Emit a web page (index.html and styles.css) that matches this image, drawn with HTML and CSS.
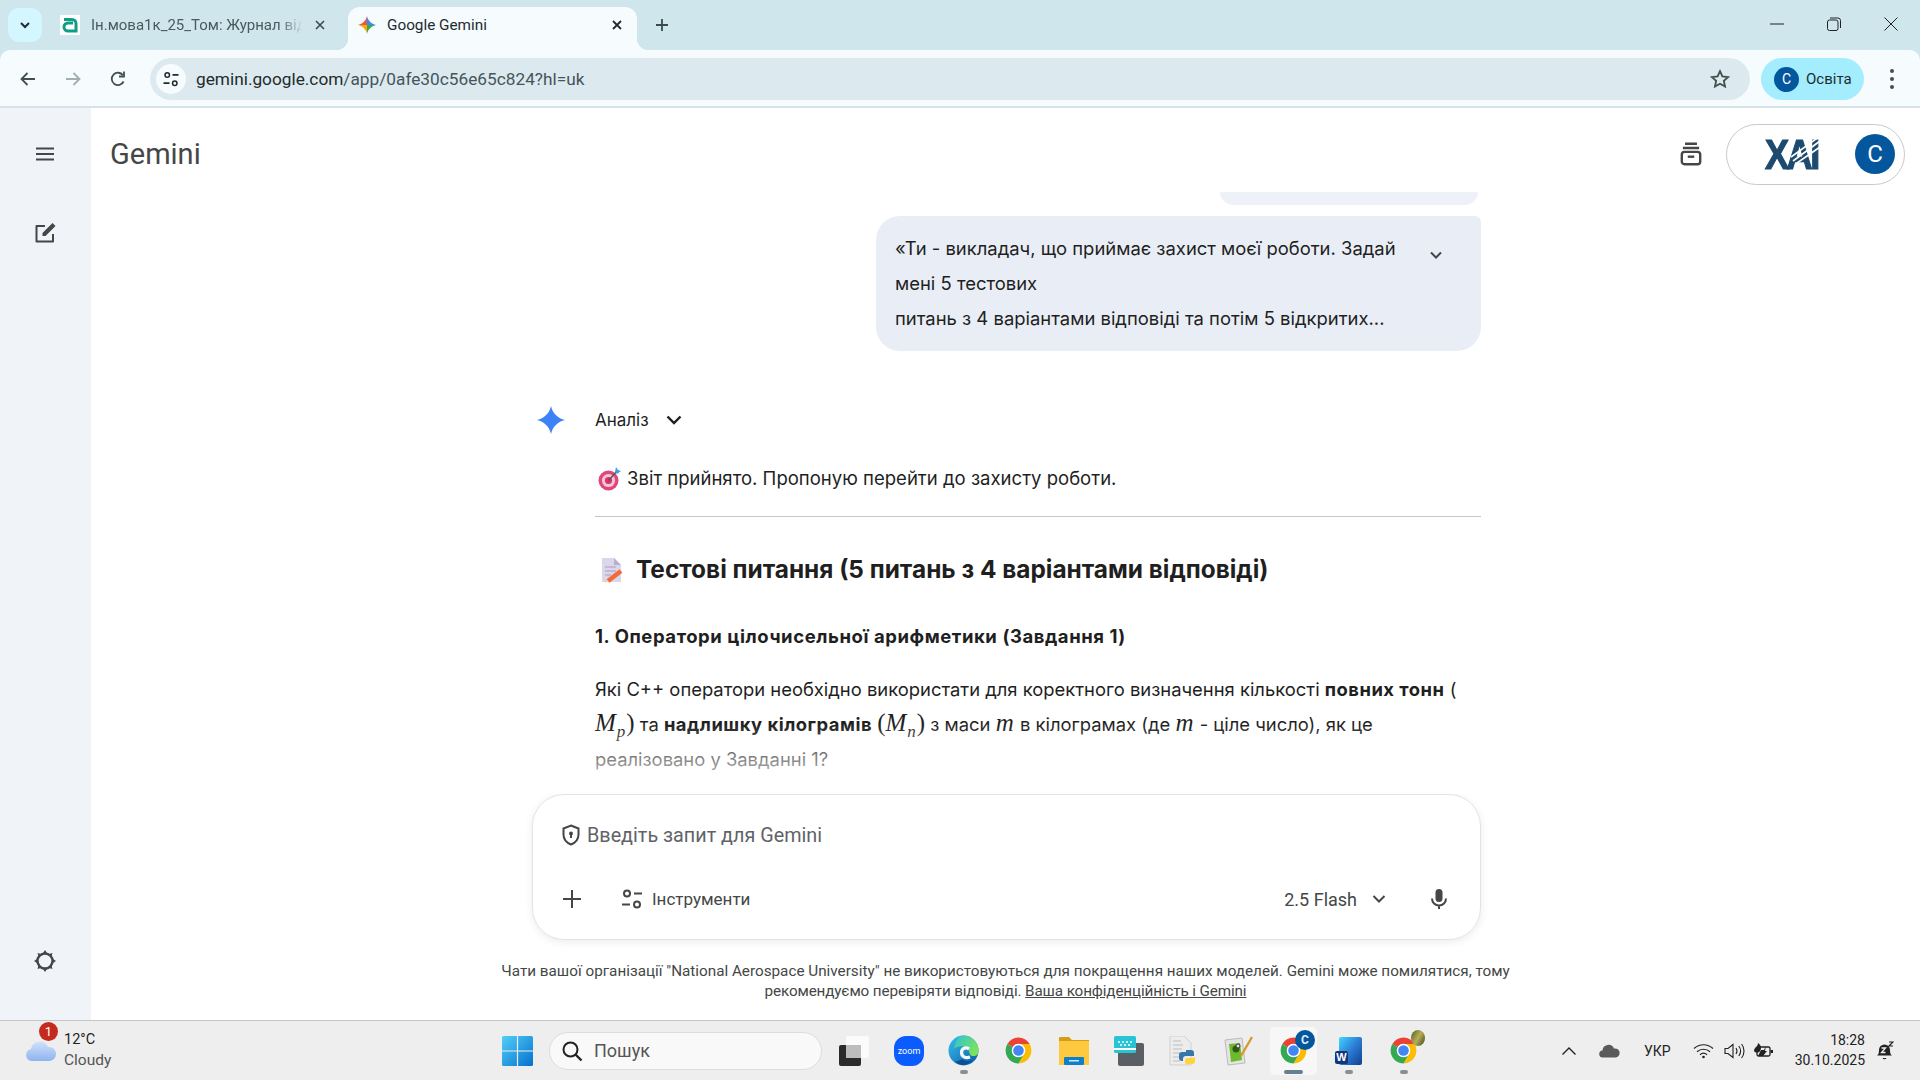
FILE: index.html
```html
<!DOCTYPE html>
<html lang="uk">
<head>
    <meta charset="UTF-8">
    <title>Google Gemini</title>
    <link rel="stylesheet" href="styles.css">
</head>
<body>
    <svg class="defs" width="0" height="0">
        <symbol id="chrome" viewBox="0 0 48 48">
            <path fill="#ea4335" d="M6.68 14A20 20 0 0 1 41.32 14H24A10 10 0 0 0 15.34 19Z"/>
            <path fill="#fbbc04" d="M41.32 14A20 20 0 0 1 24 44L32.66 29A10 10 0 0 0 24 14Z"/>
            <path fill="#34a853" d="M24 44A20 20 0 0 1 6.68 14L15.34 19A10 10 0 0 0 32.66 29Z"/>
            <circle cx="24" cy="24" r="10.5" fill="#fff"/>
            <circle cx="24" cy="24" r="8.2" fill="#4285f4"/>
        </symbol>
        <symbol id="spark" viewBox="0 0 24 24">
            <path d="M12 0C13.2 6 18 10.800 24 12C18 13.200 13.200 18 12 24C10.800 18 6 13.200 0 12C6 10.800 10.800 6 12 0Z"/>
        </symbol>
        <symbol id="tune" viewBox="0 0 24 24">
            <circle cx="7" cy="6.5" r="3" fill="none" stroke="currentColor" stroke-width="2"/>
            <path d="M14 6.5h8M2 17.5h8" stroke="currentColor" stroke-width="2.2" fill="none"/>
            <circle cx="17" cy="17.5" r="3" fill="none" stroke="currentColor" stroke-width="2"/>
        </symbol>
    </svg>

    <div class="tabstrip">
        <button class="tab-list">
            <svg width="14" height="14" viewBox="0 0 14 14"><path d="M3 5l4 4 4-4" fill="none" stroke="#1f2b2e" stroke-width="2"/></svg>
        </button>
        <div class="tab">
            <svg class="favicon" width="20" height="20" viewBox="0 0 20 20">
                <rect width="20" height="20" fill="#fff"/>
                <path d="M4 4.5h8a4 4 0 0 1 4 4V16H8a4 4 0 0 1 0-8h5" fill="none" stroke="#0f9d87" stroke-width="3"/>
            </svg>
            <span class="tab-title faded">Ін.мова1к_25_Том: Журнал від</span>
            <svg class="tab-close" width="12" height="12" viewBox="0 0 12 12"><path d="M2 2l8 8M10 2l-8 8" stroke="#3c4a4e" stroke-width="1.6"/></svg>
        </div>
        <div class="tab tab-active">
            <svg class="favicon" width="18" height="18" viewBox="0 0 24 24">
                <path fill="#e8574a" d="M12 0C10.800 6 6 10.800 0 12H12Z"/>
                <path fill="#4285f4" d="M12 0C13.200 6 18 10.800 24 12H12Z"/>
                <path fill="#34a853" d="M24 12C18 13.200 13.200 18 12 24V12Z"/>
                <path fill="#f9ab00" d="M0 12C6 13.200 10.800 18 12 24V12Z"/>
            </svg>
            <span class="tab-title">Google Gemini</span>
            <svg class="tab-close" width="12" height="12" viewBox="0 0 12 12"><path d="M2 2l8 8M10 2l-8 8" stroke="#1f2b2e" stroke-width="1.8"/></svg>
        </div>
        <svg class="new-tab" width="16" height="16" viewBox="0 0 16 16"><path d="M8 2v12M2 8h12" stroke="#3c4a4e" stroke-width="1.8"/></svg>
        <div class="win-controls">
            <span class="win-btn"><svg width="14" height="14" viewBox="0 0 14 14"><path d="M0 7h14" stroke="#222" stroke-width="1"/></svg></span>
            <span class="win-btn"><svg width="14" height="14" viewBox="0 0 14 14"><rect x="0.5" y="3" width="10.5" height="10.5" rx="2" fill="none" stroke="#222"/><path d="M3 1h8a2.5 2.5 0 0 1 2.5 2.5V11" fill="none" stroke="#222"/></svg></span>
            <span class="win-btn"><svg width="14" height="14" viewBox="0 0 14 14"><path d="M.5.5l13 13M13.5.5l-13 13" stroke="#222" stroke-width="1"/></svg></span>
        </div>
    </div>

    <div class="toolbar">
        <span class="nav-btn"><svg width="20" height="20" viewBox="0 0 20 20"><path d="M17 10H4M9.5 4L3.5 10l6 6" fill="none" stroke="#41504f" stroke-width="1.8"/></svg></span>
        <span class="nav-btn"><svg width="20" height="20" viewBox="0 0 20 20"><path d="M3 10h13M10.5 4l6 6-6 6" fill="none" stroke="#a3aeb0" stroke-width="1.8"/></svg></span>
        <span class="nav-btn"><svg width="20" height="20" viewBox="0 0 20 20"><path d="M15.6 12.5a6.2 6.2 0 1 1-.6-6.2" fill="none" stroke="#41504f" stroke-width="1.8"/><path d="M16 2.5V7.5H11" fill="none" stroke="#41504f" stroke-width="1.8"/></svg></span>
        <div class="omnibox">
            <span class="site-info"><svg width="18" height="18" viewBox="0 0 24 24" class="ink-dark"><use href="#tune"/></svg></span>
            <span class="url">gemini.google.com<span class="url-path">/app/0afe30c56e65c824?hl=uk</span></span>
            <svg class="star" width="22" height="22" viewBox="0 0 24 24"><path d="M12 3.5l2.6 5.7 6.2.7-4.6 4.2 1.3 6.1L12 17.2l-5.5 3 1.3-6.1L3.2 9.9l6.2-.7z" fill="none" stroke="#41504f" stroke-width="2"/></svg>
        </div>
        <div class="profile-pill"><span class="profile-avatar">С</span><span>Освіта</span></div>
        <span class="menu-btn"><i></i><i></i><i></i></span>
    </div>

    <div class="app">
        <aside class="sidebar">
            <svg width="24" height="24" viewBox="0 0 24 24"><path d="M3 6.5h18M3 12h18M3 17.5h18" stroke="#444746" stroke-width="2"/></svg>
            <svg class="side-edit" width="24" height="24" viewBox="0 0 24 24"><path d="M20 13v7.500H3.500V5H12" fill="none" stroke="#444746" stroke-width="2" stroke-linejoin="round"/><path d="M9.500 15v-3L19.500 2l3 3-10 10z" fill="#444746"/></svg>
            <svg class="side-settings" width="24" height="24" viewBox="0 0 24 24"><circle cx="12" cy="12" r="7.5" fill="none" stroke="#444746" stroke-width="2.400"/><path d="M10 4l2-3 2 3zM10 20l2 3 2-3zM4 10l-3 2 3 2zM20 10l3 2-3 2zM5.500 7.500l-1-3.500 3.500 1zM18.500 7.500l1-3.500-3.500 1zM5.500 16.500l-1 3.500 3.500-1zM18.500 16.500l1 3.500-3.500-1z" fill="#444746"/></svg>
        </aside>
        <main class="main">
            <header class="page-head">
                <span class="brand">Gemini</span>
                <svg class="archive" width="26" height="26" viewBox="0 0 24 24">
                    <path d="M6.5 2.5h11M4.5 6.5h15" stroke="#444746" stroke-width="2.4" fill="none"/>
                    <rect x="3.5" y="10" width="17" height="11.5" rx="2.5" fill="none" stroke="#444746" stroke-width="2.2"/>
                    <path d="M9 14.5h6" stroke="#444746" stroke-width="2.2"/>
                </svg>
                <div class="account">
                    <span class="xai"><b>XAI</b>
                        <svg class="xai-stripes" width="30" height="32" viewBox="0 0 30 32"><path d="M2 25L29 5M6 27L29 11M0 21L29 0" stroke="#fff" stroke-width="1.6"/></svg>
                    </span>
                    <span class="account-avatar">С</span>
                </div>
            </header>

            <section class="chat">
                <div class="column">
                    <div class="prev-bubble"></div>
                    <div class="bubble">
                        <p>«Ти - викладач, що приймає захист моєї роботи. Задай<br>мені 5 тестових<br>питань з 4 варіантами відповіді та потім 5 відкритих...</p>
                        <svg class="bubble-chevron" width="20" height="20" viewBox="0 0 20 20"><path d="M5 7.5l5 5 5-5" fill="none" stroke="#444746" stroke-width="2"/></svg>
                    </div>
                    <div class="analysis">
                        <svg class="spark" width="28" height="28"><use href="#spark"/></svg>
                        <span>Аналіз</span>
                        <svg width="18" height="18" viewBox="0 0 18 18"><path d="M2.5 5.5L9 12l6.5-6.5" fill="none" stroke="#1f1f1f" stroke-width="2.4"/></svg>
                    </div>
                    <div class="answer">
                        <p class="lead">
                            <svg class="emoji" width="23" height="24" viewBox="0 0 23 24">
                                <circle cx="10.5" cy="13.5" r="10" fill="#e0457b"/>
                                <circle cx="10.5" cy="13.5" r="6.6" fill="#f6c6d6"/>
                                <circle cx="10.5" cy="13.5" r="3.6" fill="#d8366d"/>
                                <path d="M10.5 13.5L19 4" stroke="#555" stroke-width="1.4"/>
                                <path d="M17 5l1-5 2 3 3 1-4 3z" fill="#3aa0e8"/>
                            </svg>
                            Звіт прийнято. Пропоную перейти до захисту роботи.
                        </p>
                        <hr class="rule">
                        <h2>
                            <svg class="emoji-doc" width="26" height="26" viewBox="0 0 26 26">
                                <path d="M3 1h12l7 7v17H3z" fill="#dcd6ea"/>
                                <path d="M15 1l7 7h-7z" fill="#b9b0cd"/>
                                <path d="M6 10h11M6 14h11M6 18h6" stroke="#a79dbf" stroke-width="1.2"/>
                                <path d="M9 24l13-10" stroke="#f26b3a" stroke-width="4.500"/>
                                <path d="M5.500 25.500l1.500-4 2.500 3z" fill="#f8c9a8"/>
                            </svg>
                            Тестові питання (5 питань з 4 варіантами відповіді)
                        </h2>
                        <h3>1. Оператори цілочисельної арифметики (Завдання 1)</h3>
                        <p class="question">Які С++ оператори необхідно використати для коректного визначення кількості <b>повних тонн</b> (<br><span class="math"><i>M<sub>p</sub></i>)</span> та <b>надлишку кілограмів</b> <span class="math">(<i>M<sub>n</sub></i>)</span> з маси <span class="math"><i>m</i></span> в кілограмах (де <span class="math"><i>m</i></span> - ціле число), як це<br>реалізовано у Завданні 1?</p>
                    </div>
                </div>
                <div class="chat-fade"></div>
            </section>

            <div class="column composer">
                <div class="composer-input">
                    <svg width="20" height="22" viewBox="0 0 20 22"><path d="M10 1.5l7.5 3v6c0 4.6-3 8.2-7.5 10-4.500-1.800-7.500-5.400-7.500-10v-6z" fill="none" stroke="#444746" stroke-width="2"/><circle cx="10" cy="9.500" r="2" fill="#444746"/><path d="M10 10v4" stroke="#444746" stroke-width="2"/></svg>
                    <span>Введіть запит для Gemini</span>
                </div>
                <div class="composer-tools">
                    <svg width="24" height="24" viewBox="0 0 24 24"><path d="M12 3v18M3 12h18" stroke="#444746" stroke-width="2"/></svg>
                    <svg class="tools-icon" width="24" height="24"><use href="#tune"/></svg>
                    <span class="tools-label">Інструменти</span>
                    <span class="model">2.5 Flash</span>
                    <svg class="model-chevron" width="18" height="18" viewBox="0 0 18 18"><path d="M3.500 6L9 11.500 14.500 6" fill="none" stroke="#444746" stroke-width="2"/></svg>
                    <svg class="mic" width="24" height="24" viewBox="0 0 24 24"><rect x="8.500" y="2" width="7" height="13" rx="3.500" fill="#444746"/><path d="M5 11.500a7 7 0 0 0 14 0M12 18.500V22" fill="none" stroke="#444746" stroke-width="2"/></svg>
                </div>
            </div>
            <p class="disclaimer">Чати вашої організації "National Aerospace University" не використовуються для покращення наших моделей. Gemini може помилятися, тому<br><span class="disclaimer-tail">рекомендуємо перевіряти відповіді. <a href="#">Ваша конфіденційність і Gemini</a></span></p>
        </main>
    </div>

    <footer class="taskbar">
        <div class="weather">
            <svg class="weather-cloud" width="32" height="22" viewBox="0 0 32 22">
                <defs><linearGradient id="cloud" x1="0" y1="0" x2="0" y2="1"><stop offset="0" stop-color="#cfe0fb"/><stop offset="1" stop-color="#8fb4ee"/></linearGradient></defs>
                <path d="M7 21a6 6 0 0 1-1-11.900A9 9 0 0 1 23 7a7 7 0 0 1 2 14z" fill="url(#cloud)"/>
            </svg>
            <span class="weather-badge">1</span>
            <div class="weather-text"><span>12°C</span><span class="muted">Cloudy</span></div>
        </div>
        <svg class="win-logo" width="31" height="30" viewBox="0 0 31 30">
            <defs><linearGradient id="win" x1="0" y1="0" x2="1" y2="1"><stop offset="0" stop-color="#52d0f7"/><stop offset="1" stop-color="#0670ce"/></linearGradient></defs>
            <rect width="31" height="30" fill="url(#win)" rx="1.500"/>
            <path d="M15.500 0v30M0 15h31" stroke="#eee" stroke-width="1.200"/>
        </svg>
        <div class="search">
            <svg width="22" height="22" viewBox="0 0 22 22"><circle cx="9.500" cy="9.500" r="7" fill="none" stroke="#222" stroke-width="2"/><path d="M14.500 14.500l6 6" stroke="#222" stroke-width="2.400"/></svg>
            <span>Пошук</span>
        </div>
        <div class="tasks">
            <span class="task">
                <svg width="30" height="30" viewBox="0 0 30 30"><rect x="0" y="9" width="22" height="21" rx="2" fill="#2b2b2b"/><rect x="7" y="0" width="23" height="22" rx="2" fill="#fff" fill-opacity=".75"/><rect x="7" y="9" width="15" height="13" fill="#bdbdbd"/></svg>
            </span>
            <span class="task">
                <svg width="30" height="30" viewBox="0 0 30 30"><rect width="30" height="30" rx="12" fill="#0b5cff"/><text x="15" y="18" text-anchor="middle" class="zoom-word">zoom</text></svg>
            </span>
            <span class="task running">
                <svg width="31" height="31" viewBox="0 0 31 31">
                    <defs>
                        <linearGradient id="edge-a" x1="0" y1="0" x2="1" y2="1"><stop offset="0" stop-color="#35c1f1"/><stop offset="1" stop-color="#0c59a4"/></linearGradient>
                        <linearGradient id="edge-b" x1="0" y1="0" x2="1" y2="0.6"><stop offset="0" stop-color="#2bc3d6"/><stop offset="1" stop-color="#7ee35b"/></linearGradient>
                    </defs>
                    <circle cx="15.500" cy="15.500" r="15" fill="url(#edge-a)"/>
                    <path d="M15 .500A15 15 0 0 1 30.500 16c0 4-3 5.500-6 5-3-.5-3-3.500-4-6C19 11 10 9.500 6 14 7 6 10 .500 15 .500z" fill="url(#edge-b)"/>
                    <path d="M21 14c-3-2.500-7.500-.5-7.500 3.500s4 6 8.500 4.500" fill="none" stroke="#f4fbff" stroke-width="3.200"/>
                    <path d="M14 24c3 2.500 7 2.500 11 .5C21 31 11 32 7 26c3 .5 5-.5 7-2z" fill="#0c4f93"/>
                </svg>
            </span>
            <span class="task"><svg width="31" height="31"><use href="#chrome"/></svg></span>
            <span class="task">
                <svg width="30" height="30" viewBox="0 0 30 30"><path d="M0 2a1 1 0 0 1 1-1h9l3 3h17v4H0z" fill="#d89c12"/><path d="M0 5h30v24H0z" fill="#fcc93f"/><rect x="5" y="21" width="20" height="8" rx="1" fill="#0f7fca"/><rect x="10" y="24" width="10" height="1.500" fill="#cfe9fa"/></svg>
            </span>
            <span class="task">
                <svg width="30" height="30" viewBox="0 0 30 30"><rect x="4" y="7" width="26" height="23" rx="2" fill="#5a5f66"/><rect x="0" y="0" width="22" height="17" rx="1.500" fill="#26c4d6"/><path d="M4 6h2M8 6h2M12 6h2M16 6h2M6 9h2M10 9h2M14 9h2" stroke="#fff" stroke-width="1.500"/><rect x="0" y="12" width="22" height="2" fill="#fff"/></svg>
            </span>
            <span class="task">
                <svg width="30" height="30" viewBox="0 0 30 30"><path d="M1 0h14l7 7v22H1z" fill="#ececec" stroke="#cfcfcf"/><path d="M4 5h8M4 9h10M4 13h9M4 17h7M4 21h8M4 25h7" stroke="#bdbdbd"/><path d="M17 14h5a3 3 0 0 1 3 3v3H17a3 3 0 0 0-3 3v2h-1a3 3 0 0 1-3-3v-3a3 3 0 0 1 3-3h4z" fill="#3776ab"/><path d="M19 28h4a3 3 0 0 0 3-3v-4h-1l-1 1h-5a3 3 0 0 0-3 3v1a2 2 0 0 0 3 2z" fill="#ffd43b"/></svg>
            </span>
            <span class="task">
                <svg width="30" height="30" viewBox="0 0 30 30"><path d="M1 4l17-2 3 25-17 2z" fill="#e4e4e4" stroke="#bbb"/><path d="M5 8l11-1 2 17-11 2z" fill="#6dbb2c"/><circle cx="12" cy="13" r="3.500" fill="#2c5d16"/><circle cx="14" cy="10" r="2" fill="#e8e8e8" stroke="#333"/><path d="M17 20L28 1" stroke="#d79a32" stroke-width="2.400"/></svg>
            </span>
            <span class="task running active">
                <svg width="31" height="31"><use href="#chrome"/></svg>
                <span class="chrome-profile">С</span>
            </span>
            <span class="task running">
                <svg width="27" height="28" viewBox="0 0 27 28">
                    <defs><linearGradient id="word" x1="0" y1="0" x2="1" y2="1"><stop offset="0" stop-color="#41d6ff"/><stop offset="0.5" stop-color="#2b7cd3"/><stop offset="1" stop-color="#103f91"/></linearGradient></defs>
                    <rect x="4" y="0" width="23" height="28" rx="2" fill="url(#word)"/>
                    <rect x="0" y="14" width="13" height="13" rx="2" fill="#11357f"/>
                    <text x="6.500" y="24" text-anchor="middle" class="word-letter">W</text>
                </svg>
            </span>
            <span class="task running">
                <svg width="31" height="31"><use href="#chrome"/></svg>
                <span class="chrome-melon"></span>
            </span>
        </div>
        <div class="tray">
            <svg width="16" height="10" viewBox="0 0 16 10"><path d="M1.500 8.500L8 2l6.500 6.500" fill="none" stroke="#222" stroke-width="1.400"/></svg>
            <svg class="tray-cloud" width="21" height="14" viewBox="0 0 21 14"><path d="M4 13.500a3.500 3.500 0 0 1-.5-7A6 6 0 0 1 15 4.500a4.500 4.500 0 0 1 2 9z" fill="#5a5a5a"/></svg>
            <span class="lang">УКР</span>
            <svg class="tray-wifi" width="21" height="16" viewBox="0 0 21 16"><path d="M1 5.500c5.500-5 13.500-5 19 0M4 8.700c3.700-3.300 9.300-3.300 13 0M7 11.700c2-1.700 5-1.700 7 0" fill="none" stroke="#222" stroke-width="1.200"/><circle cx="10.500" cy="14" r="1.300" fill="#222"/></svg>
            <svg class="tray-volume" width="21" height="16" viewBox="0 0 21 16"><path d="M1 5.500h3L9 1.500v13L4 10.500H1z" fill="none" stroke="#222" stroke-width="1.100"/><path d="M12 5c1.200 1.800 1.200 4.200 0 6M14.800 3c2.200 3 2.200 7 0 10M17.600 1c3.200 4 3.200 10 0 14" fill="none" stroke="#222" stroke-width="1.100"/></svg>
            <svg class="tray-battery" width="21" height="17" viewBox="0 0 21 17"><rect x="4" y="5" width="13" height="9" rx="1.500" fill="none" stroke="#222" stroke-width="1.300"/><rect x="17.500" y="8" width="2.500" height="3" fill="#222"/><path d="M5 14l3-6h3l2-4-1 5h2l-4 5z" fill="#222"/><path d="M1 9c0-4 4-4 4-8 3 2 4 5 2 8-1 2-5 2-6 0z" fill="#222"/></svg>
            <div class="clock"><span>18:28</span><span>30.10.2025</span></div>
            <svg class="tray-bell" width="18" height="20" viewBox="0 0 18 20"><path d="M1 14.500c1.500-1 2-2.500 2-5.500a5.500 5.500 0 0 1 11 0c0 3 .5 4.500 2 5.500z" fill="#222"/><path d="M6.500 17a2.200 2.200 0 0 0 4 0z" fill="#222"/><path d="M5.500 7h4l-4 4.500h4" fill="none" stroke="#eee" stroke-width="1.300"/><path d="M13 1h4l-4 4h4" fill="none" stroke="#222" stroke-width="1.200"/></svg>
        </div>
    </footer>
</body>
</html>
```

FILE: styles.css
```css
* {
    box-sizing: border-box;
}
body {
    margin: 0;
    width: 1920px;
    height: 1080px;
    overflow: hidden;
    display: flex;
    flex-direction: column;
    background-color: #cfe6ec;
    font-family: Roboto, "Noto Sans", sans-serif;
    color: #1f1f1f;
}
.defs {
    position: absolute;
}
svg {
    display: block;
    flex-shrink: 0;
}

/* browser tabs */
.tabstrip {
    height: 50px;
    display: flex;
    align-items: flex-start;
    padding-left: 8px;
    flex-shrink: 0;
}
.tab-list {
    width: 34px;
    height: 34px;
    margin-top: 8px;
    border: none;
    border-radius: 11px;
    background-color: #d3f6ff;
    display: flex;
    align-items: center;
    justify-content: center;
    padding: 0;
}
.tab {
    width: 292px;
    height: 43px;
    margin-top: 7px;
    margin-left: 6px;
    padding: 0 14px 7px 12px;
    display: flex;
    align-items: center;
    font-size: 15px;
    color: #4a5a5e;
    position: relative;
}
.tab-active {
    width: 289px;
    margin-left: 8px;
    padding: 0 14px 7px 10px;
    background-color: #f6fbfd;
    border-radius: 12px 12px 0 0;
    color: #1f2b2e;
    font-size: 15.300px;
}
.tab-active::before,
.tab-active::after {
    content: "";
    position: absolute;
    bottom: 0;
    width: 12px;
    height: 12px;
}
.tab-active::before {
    left: -12px;
    background: radial-gradient(circle at 0 0, transparent 12px, #f6fbfd 12.5px);
}
.tab-active::after {
    right: -12px;
    background: radial-gradient(circle at 100% 0, transparent 12px, #f6fbfd 12.5px);
}
.tab-title {
    flex: 1;
    margin-left: 11px;
    white-space: nowrap;
}
.faded {
    -webkit-mask-image: linear-gradient(to right, #000 188px, transparent 212px);
    mask-image: linear-gradient(to right, #000 188px, transparent 212px);
}
.tab-close {
    margin-left: 8px;
}
.new-tab {
    margin-left: 17px;
    margin-top: 17px;
}
.win-controls {
    margin-left: auto;
    display: flex;
    padding-right: 1px;
}
.win-btn {
    width: 57px;
    height: 48px;
    display: flex;
    align-items: center;
    justify-content: center;
}

/* address bar */
.toolbar {
    height: 58px;
    flex-shrink: 0;
    display: flex;
    align-items: center;
    padding: 2px 0 0 5px;
    background-color: #f6fbfd;
    border-bottom: 2px solid #d5e3e6;
    border-radius: 10px 10px 0 0;
}
.nav-btn {
    width: 45px;
    display: flex;
    justify-content: center;
}
.omnibox {
    flex: 1;
    height: 42px;
    margin-left: 10px;
    padding: 0 19px 0 6px;
    display: flex;
    align-items: center;
    border-radius: 21px;
    background-color: #dceaef;
}
.site-info {
    width: 30px;
    height: 30px;
    border-radius: 50%;
    background-color: #f6fbfd;
    display: flex;
    align-items: center;
    justify-content: center;
}
.ink-dark {
    color: #1f2b2e;
}
.url {
    margin-left: 10px;
    font-size: 17.250px;
    color: #1f2b2e;
}
.url-path {
    color: #45555a;
}
.star {
    margin-left: auto;
}
.profile-pill {
    width: 103px;
    height: 42px;
    margin-left: 11px;
    padding-left: 13px;
    display: flex;
    align-items: center;
    gap: 7px;
    border-radius: 21px;
    background-color: #a3edff;
    font-size: 15px;
    color: #1f2b2e;
}
.profile-avatar {
    width: 25px;
    height: 25px;
    border-radius: 50%;
    background-color: #04579d;
    color: #fff;
    font-size: 14px;
    display: flex;
    align-items: center;
    justify-content: center;
}
.menu-btn {
    width: 56px;
    display: flex;
    flex-direction: column;
    align-items: center;
    gap: 4px;
}
.menu-btn i {
    width: 4px;
    height: 4px;
    border-radius: 50%;
    background-color: #41504f;
}

/* page */
.app {
    flex: 1;
    display: flex;
    min-height: 0;
    background-color: #fff;
}
.sidebar {
    width: 91px;
    background-color: #f0f4f9;
    display: flex;
    flex-direction: column;
    align-items: center;
    padding: 34px 1px 47px 0;
}
.side-edit {
    margin-top: 55px;
}
.side-settings {
    margin-top: auto;
}
.main {
    flex: 1;
    min-width: 0;
    display: flex;
    flex-direction: column;
}
.page-head {
    height: 84px;
    flex-shrink: 0;
    display: flex;
    align-items: center;
    padding: 8px 15px 0 19px;
}
.brand {
    font-size: 29px;
    color: #444746;
}
.archive {
    margin-left: auto;
    margin-right: 22px;
}
.account {
    width: 179px;
    height: 61px;
    padding: 0 9px 0 38px;
    border: 1px solid #c9c9c9;
    border-radius: 31px;
    display: flex;
    align-items: center;
    justify-content: space-between;
}
.xai {
    position: relative;
    width: 56px;
    font-family: "Liberation Sans", sans-serif;
    font-size: 43px;
    color: #1d4a6e;
    line-height: 1;
}
.xai b {
    display: block;
    font-weight: 700;
    letter-spacing: -3px;
    -webkit-text-stroke: 1.200px #1d4a6e;
    transform: scaleX(0.84);
    transform-origin: left center;
}
.xai-stripes {
    position: absolute;
    right: 0;
    top: 3px;
}
.account-avatar {
    width: 40px;
    height: 40px;
    border-radius: 50%;
    background-color: #04579d;
    color: #fff;
    font-size: 24px;
    display: flex;
    align-items: center;
    justify-content: center;
}
.chat {
    flex: 1;
    min-height: 0;
    overflow: hidden;
    position: relative;
}
.column {
    width: 949px;
    margin-left: 441px;
}
.prev-bubble {
    width: 258px;
    height: 13px;
    margin-left: auto;
    margin-right: 3px;
    background-color: #eef2f8;
    border-radius: 0 0 14px 14px;
}
.bubble {
    width: 605px;
    height: 135px;
    margin-top: 11px;
    margin-left: auto;
    padding: 15px 0 0 19px;
    display: flex;
    background-color: #e9eef6;
    border-radius: 24px 6px 24px 24px;
    font-family: Inter, Roboto, sans-serif;
    font-size: 18.450px;
    line-height: 35px;
}
.bubble p {
    margin: 0;
    white-space: nowrap;
    width: 531px;
}
.bubble-chevron {
    margin-top: 14px;
}
.analysis {
    height: 28px;
    margin-top: 55px;
    display: flex;
    align-items: center;
    font-family: Inter, Roboto, sans-serif;
    font-size: 17px;
}
.spark {
    margin-left: 5px;
    margin-right: 30px;
    fill: #3e82f7;
}
.analysis span {
    margin-right: 16px;
}
.answer {
    margin-left: 63px;
    font-family: Inter, Roboto, sans-serif;
    font-size: 18.400px;
    line-height: 35px;
}
.answer b {
    letter-spacing: 0.5px;
}
.lead {
    margin: 27px 0 0;
    display: flex;
    align-items: center;
    gap: 6px;
    font-size: 18.550px;
}
.emoji {
    margin-left: 3px;
}
.rule {
    margin: 20px 0 0;
    border: none;
    border-top: 1px solid #c4c7c5;
}
.answer h2 {
    margin: 35px 0 0;
    display: flex;
    align-items: center;
    gap: 11px;
    font-size: 24.400px;
    line-height: 35px;
    font-weight: 700;
}
.emoji-doc {
    margin-left: 4px;
}
.answer h3 {
    margin: 32px 0 0;
    font-size: 18.500px;
    letter-spacing: 0.56px;
    line-height: 35px;
    font-weight: 700;
}
.question {
    margin: 18px 0 0;
    white-space: nowrap;
}
.math {
    font-family: "Liberation Serif", serif;
    font-size: 25px;
    line-height: 0;
}
.math i {
    letter-spacing: 1px;
}
.math sub {
    font-size: 17px;
    line-height: 0;
}
.chat-fade {
    position: absolute;
    left: 0;
    right: 0;
    bottom: 0;
    height: 70px;
    background: linear-gradient(to bottom, rgba(255, 255, 255, 0), rgba(255, 255, 255, 0.9));
}

/* prompt box */
.composer {
    height: 146px;
    flex-shrink: 0;
    padding: 21px 29px 19px 27px;
    border: 1px solid #e3e3e3;
    border-radius: 32px;
    box-shadow: 0 2px 8px rgba(0, 0, 0, 0.08);
}
.composer-input {
    height: 38px;
    display: flex;
    align-items: center;
    gap: 6px;
    padding-left: 1px;
    font-size: 19.800px;
    color: #5f6368;
}
.composer-tools {
    height: 40px;
    margin-top: 25px;
    display: flex;
    align-items: center;
    font-size: 17px;
    color: #444746;
}
.tools-icon {
    margin-left: 36px;
    color: #444746;
}
.tools-label {
    margin-left: 8px;
}
.model {
    margin-left: auto;
    font-size: 18px;
}
.model-chevron {
    margin-left: 13px;
    margin-right: 39px;
}
.disclaimer {
    margin: 21px 0 19px;
    text-align: center;
    font-size: 15.250px;
    line-height: 20px;
    color: #444746;
}
.disclaimer-tail {
    letter-spacing: -0.13px;
}
.disclaimer a {
    color: #444746;
}

/* windows taskbar */
.taskbar {
    height: 60px;
    flex-shrink: 0;
    display: flex;
    align-items: center;
    background-color: #eeeeee;
    border-top: 1px solid #c6c6c6;
    position: relative;
}
.weather {
    width: 502px;
    padding-left: 25px;
    display: flex;
    align-items: center;
    position: relative;
}
.weather-badge {
    position: absolute;
    left: 39px;
    top: -8px;
    width: 19px;
    height: 19px;
    border-radius: 50%;
    background-color: #c42b1c;
    color: #fff;
    font-size: 13px;
    display: flex;
    align-items: center;
    justify-content: center;
}
.weather-text {
    margin-left: 7px;
    padding-bottom: 2px;
    display: flex;
    flex-direction: column;
    font-size: 14.500px;
    line-height: 20px;
}
.muted {
    color: #555;
    font-size: 15.500px;
}
.search {
    width: 273px;
    height: 38px;
    margin-left: 16px;
    padding-left: 11px;
    display: flex;
    align-items: center;
    gap: 11px;
    border: 1px solid #dddddd;
    border-radius: 19px;
    background-color: #f9f9f9;
    font-size: 18px;
    color: #555;
}
.tasks {
    margin-left: 4px;
    display: flex;
}
.task {
    width: 55px;
    height: 48px;
    display: flex;
    align-items: center;
    justify-content: center;
    position: relative;
}
.running::after {
    content: "";
    position: absolute;
    bottom: 1px;
    left: 24px;
    width: 8px;
    height: 4px;
    border-radius: 2px;
    background-color: #8a8f94;
}
.active {
    background-color: #f7f7f7;
    border-radius: 5px;
    width: 47px;
    margin: 0 4px;
}
.active::after {
    left: 14px;
    width: 19px;
    background-color: #667f91;
}
.chrome-profile {
    position: absolute;
    top: 3px;
    right: 2px;
    width: 20px;
    height: 20px;
    border-radius: 50%;
    background-color: #04579d;
    color: #dcecf8;
    font-size: 12px;
    font-weight: 700;
    display: flex;
    align-items: center;
    justify-content: center;
}
.chrome-melon {
    position: absolute;
    top: 3px;
    right: 6px;
    width: 14px;
    height: 16px;
    border-radius: 50%;
    background: linear-gradient(120deg, #4f5a1c, #b7ae58 50%, #3c4514);
}
.zoom-word {
    font-family: Roboto, sans-serif;
    font-size: 9px;
    fill: #fff;
}
.word-letter {
    font-family: "Liberation Sans", sans-serif;
    font-size: 11px;
    font-weight: 700;
    fill: #fff;
}
.tray {
    margin-left: auto;
    padding-right: 26px;
    display: flex;
    align-items: center;
}
.tray-cloud {
    margin-left: 22px;
}
.lang {
    margin-left: 24px;
    font-size: 14px;
    color: #222;
}
.tray-wifi {
    margin-left: 22px;
}
.tray-volume {
    margin-left: 10px;
}
.tray-battery {
    margin-left: 8px;
}
.clock {
    margin-left: 21px;
    padding-bottom: 2px;
    display: flex;
    flex-direction: column;
    align-items: flex-end;
    font-size: 14px;
    line-height: 20px;
    color: #222;
}
.tray-bell {
    margin-left: 11px;
}
```
